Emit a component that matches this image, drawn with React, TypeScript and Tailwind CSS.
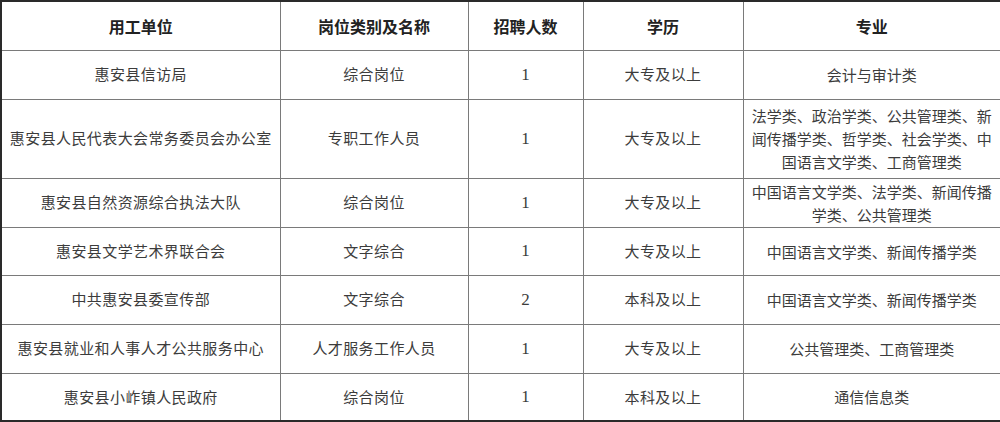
import React from "react";

const rows: { unit: string; post: string; n: string; edu: string; major: string; h: string }[] = [
  { unit: "惠安县信访局", post: "综合岗位", n: "1", edu: "大专及以上", major: "会计与审计类", h: "h-[49px]" },
  {
    unit: "惠安县人民代表大会常务委员会办公室",
    post: "专职工作人员",
    n: "1",
    edu: "大专及以上",
    major: "法学类、政治学类、公共管理类、新闻传播学类、哲学类、社会学类、中国语言文学类、工商管理类",
    h: "h-[79px]",
  },
  {
    unit: "惠安县自然资源综合执法大队",
    post: "综合岗位",
    n: "1",
    edu: "大专及以上",
    major: "中国语言文学类、法学类、新闻传播学类、公共管理类",
    h: "h-[49px]",
  },
  { unit: "惠安县文学艺术界联合会", post: "文字综合", n: "1", edu: "大专及以上", major: "中国语言文学类、新闻传播学类", h: "h-[48px]" },
  { unit: "中共惠安县委宣传部", post: "文字综合", n: "2", edu: "本科及以上", major: "中国语言文学类、新闻传播学类", h: "h-[49px]" },
  { unit: "惠安县就业和人事人才公共服务中心", post: "人才服务工作人员", n: "1", edu: "大专及以上", major: "公共管理类、工商管理类", h: "h-[49px]" },
  { unit: "惠安县小岞镇人民政府", post: "综合岗位", n: "1", edu: "本科及以上", major: "通信信息类", h: "h-[48px]" },
];

const cjk = "font-['Noto_Sans_CJK_SC','Noto_Sans',sans-serif]";

export default function App() {
  return (
    <div className="w-[1000px] h-[422px] bg-white">
      <table className={`w-[1000px] table-fixed border-collapse border-2 border-[#2a2a2a] ${cjk}`}>
        <colgroup>
          <col className="w-[279px]" />
          <col className="w-[188px]" />
          <col className="w-[115px]" />
          <col className="w-[160px]" />
          <col className="w-[258px]" />
        </colgroup>
        <thead>
          <tr className="h-[49px]">
            {["用工单位", "岗位类别及名称", "招聘人数", "学历", "专业"].map((t) => (
              <th
                key={t}
                className="border border-[#7a7a7a] text-[16px] font-bold text-[#222] text-center align-middle p-0"
              >
                {t}
              </th>
            ))}
          </tr>
        </thead>
        <tbody>
          {rows.map((r) => (
            <tr key={r.unit} className={r.h}>
              <td className="border border-[#7a7a7a] text-[15px] tracking-[0.4px] text-[#3c3c3c] text-center align-middle p-0">
                {r.unit}
              </td>
              <td className="border border-[#7a7a7a] text-[15px] tracking-[0.4px] text-[#3c3c3c] text-center align-middle p-0">
                {r.post}
              </td>
              <td className="border border-[#7a7a7a] text-[17px] text-[#3c3c3c] text-center align-middle p-0 font-['Liberation_Serif',serif]">
                {r.n}
              </td>
              <td className="border border-[#7a7a7a] text-[15px] tracking-[0.4px] text-[#3c3c3c] text-center align-middle p-0">
                {r.edu}
              </td>
              <td className="border border-[#7a7a7a] text-[15px] leading-[23px] tracking-[0px] text-[#3c3c3c] text-center align-middle px-[6px] py-0">
                {r.major}
              </td>
            </tr>
          ))}
        </tbody>
      </table>
    </div>
  );
}
